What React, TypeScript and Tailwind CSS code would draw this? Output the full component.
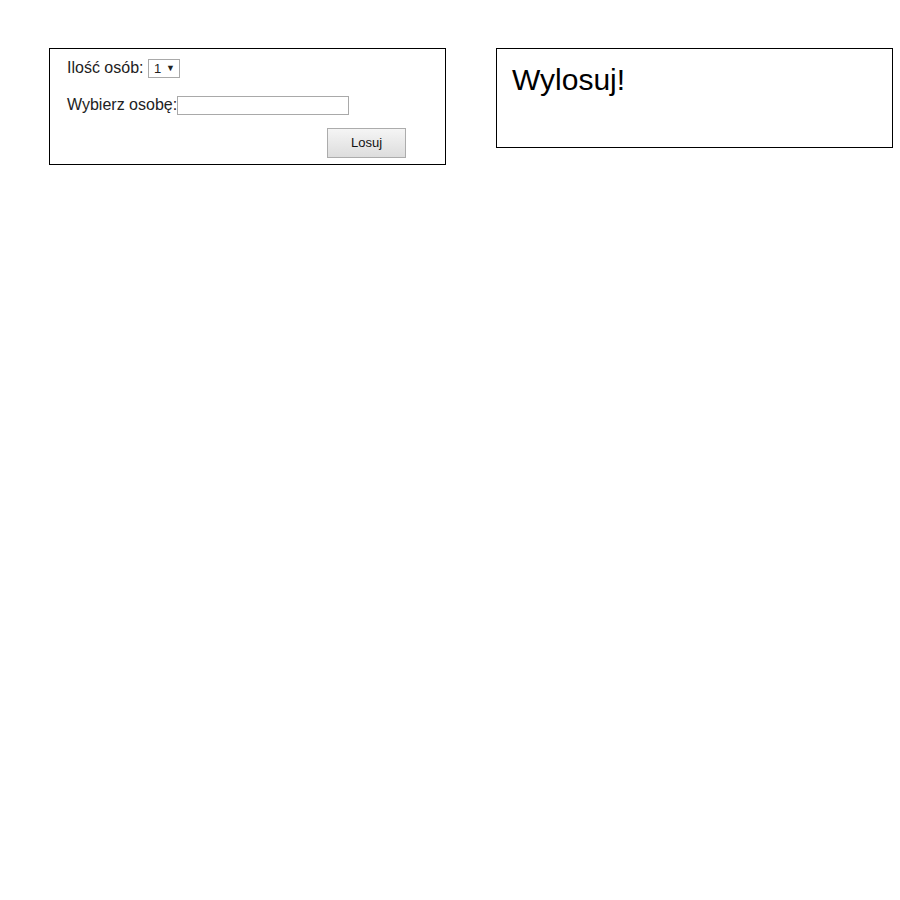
import React, { useState } from 'react';

export default function App() {
  const [count, setCount] = useState('1');
  const [person, setPerson] = useState('');

  return (
    <div className="min-h-[900px] bg-white text-black font-['Liberation_Sans',Arial,sans-serif]">
      <div className="flex items-start gap-[50px] pt-12 pl-[49px]">
        {/* FORMULARZ */}
        <div className="w-[397px] h-[117px] border border-black pl-[17px] pt-[10px]">
          <div className="flex items-center h-[18px] text-[16px] leading-none text-[#222]">
            <span>Ilość osób:&nbsp;</span>
            <div className="relative">
              <select
                value={count}
                onChange={e => setCount(e.target.value)}
                className="appearance-none w-[32px] h-[19px] border border-[#a9a9a9] bg-white pl-[5px] text-[13px] leading-none outline-none"
              >
                {[1, 2, 3, 4, 5].map(n => (
                  <option key={n} value={n}>{n}</option>
                ))}
              </select>
              <span className="pointer-events-none absolute right-[5px] top-[5px] text-[9px] leading-none">▼</span>
            </div>
          </div>

          <div className="flex items-center h-[18px] mt-[19px] text-[16px] leading-none text-[#222]">
            <span>Wybierz osobę:</span>
            <input
              type="text"
              value={person}
              onChange={e => setPerson(e.target.value)}
              className="w-[172px] h-[19px] border border-[#a9a9a9] bg-white px-1 text-[13px] outline-none"
            />
          </div>

          <div className="flex justify-end mt-[14px] pr-[39px]">
            <button className="w-[79px] h-[30px] border border-[#acacac] bg-gradient-to-b from-[#f5f5f5] to-[#dddddd] text-[13px] text-[#111]">
              Losuj
            </button>
          </div>
        </div>

        {/* WYNIK */}
        <div className="w-[397px] h-[100px] border border-black pl-[15px] pt-[14px]">
          <h1 className="text-[30px] leading-[34px]">Wylosuj!</h1>
        </div>
      </div>
    </div>
  );
}
